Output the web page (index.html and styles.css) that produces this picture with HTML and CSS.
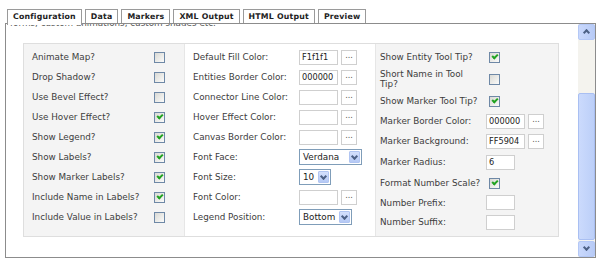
FILE: index.html
```html
<!DOCTYPE html>
<html lang="en">
  <head>
    <meta charset="UTF-8" />
    <title>Map Configuration</title>
    <link rel="stylesheet" href="styles.css">
  </head>
  <body>
    <div class="tabs">
      <div class="tab active">Configuration</div>
      <div class="tab">Data</div>
      <div class="tab">Markers</div>
      <div class="tab">XML Output</div>
      <div class="tab">HTML Output</div>
      <div class="tab">Preview</div>
    </div>
    <div class="box">
      <div class="scroll">
        <div class="intro"><span>forms, custom animations, custom shades etc.</span></div>
        <div class="panel">
          <div class="col col1">
            <div class="row"><span class="label">Animate Map?</span><span class="chk"></span></div>
            <div class="row"><span class="label">Drop Shadow?</span><span class="chk"></span></div>
            <div class="row"><span class="label">Use Bevel Effect?</span><span class="chk"></span></div>
            <div class="row"><span class="label">Use Hover Effect?</span><span class="chk on"></span></div>
            <div class="row"><span class="label">Show Legend?</span><span class="chk on"></span></div>
            <div class="row"><span class="label">Show Labels?</span><span class="chk on"></span></div>
            <div class="row"><span class="label">Show Marker Labels?</span><span class="chk on"></span></div>
            <div class="row"><span class="label">Include Name in Labels?</span><span class="chk on"></span></div>
            <div class="row"><span class="label">Include Value in Labels?</span><span class="chk"></span></div>
          </div>
          <div class="col col2">
            <div class="row"><span class="label">Default Fill Color:</span><span class="field">F1f1f1</span><span class="btn">...</span></div>
            <div class="row"><span class="label">Entities Border Color:</span><span class="field">000000</span><span class="btn">...</span></div>
            <div class="row"><span class="label">Connector Line Color:</span><span class="field"></span><span class="btn">...</span></div>
            <div class="row"><span class="label">Hover Effect Color:</span><span class="field"></span><span class="btn">...</span></div>
            <div class="row"><span class="label">Canvas Border Color:</span><span class="field"></span><span class="btn">...</span></div>
            <div class="row"><span class="label">Font Face:</span><span class="select w-face">Verdana<i class="drop"></i></span></div>
            <div class="row"><span class="label">Font Size:</span><span class="select w-size">10<i class="drop"></i></span></div>
            <div class="row"><span class="label">Font Color:</span><span class="field"></span><span class="btn">...</span></div>
            <div class="row"><span class="label">Legend Position:</span><span class="select w-pos">Bottom<i class="drop"></i></span></div>
          </div>
          <div class="col col3">
            <div class="row"><span class="label">Show Entity Tool Tip?</span><span class="chk on"></span></div>
            <div class="row tall"><span class="label">Short Name in Tool Tip?</span><span class="chk"></span></div>
            <div class="row"><span class="label">Show Marker Tool Tip?</span><span class="chk on"></span></div>
            <div class="row"><span class="label">Marker Border Color:</span><span class="field">000000</span><span class="btn">...</span></div>
            <div class="row"><span class="label">Marker Background:</span><span class="field">FF5904</span><span class="btn">...</span></div>
            <div class="row r22"><span class="label">Marker Radius:</span><span class="field small">6</span></div>
            <div class="row"><span class="label">Format Number Scale?</span><span class="chk on"></span></div>
            <div class="row r19"><span class="label">Number Prefix:</span><span class="field small"></span></div>
            <div class="row"><span class="label">Number Suffix:</span><span class="field small"></span></div>
          </div>
        </div>
      </div>
      <div class="scrollbar">
        <div class="arrow up"></div>
        <div class="track"><div class="thumb"></div></div>
        <div class="arrow down"></div>
      </div>
    </div>
  </body>
</html>
```

FILE: styles.css
```css
body {
  margin: 0;
  padding: 9px 4px 0 5px;
  background: #fff;
  font-family: "DejaVu Sans", Verdana, sans-serif;
  font-size: 8.8px;
  color: #3d3d3d;
}
.tabs {
  display: flex;
  height: 14px;
  padding-left: 2px;
}
.tab {
  border: 1px solid #9a9a9a;
  border-bottom: none;
  background: #fff;
  font-weight: bold;
  font-size: 7.8px;
  letter-spacing: 0.2px;
  color: #222;
  padding: 0 5px;
  margin-right: 3px;
  line-height: 14px;
}
.tab.active {
  height: 15px;
  position: relative;
  z-index: 1;
}
.box {
  border: 1px solid #8c8c8c;
  height: 233px;
  display: flex;
}
.scroll {
  flex: 1;
  overflow: hidden;
}
.intro {
  height: 6px;
  overflow: hidden;
  padding-left: 4px;
  color: #555;
}
.intro span {
  display: block;
  margin-top: -6px;
  line-height: 11px;
}
.panel {
  margin: 13px 0 0 17px;
  width: 534px;
  height: 192px;
  border: 1px solid #dedede;
  display: flex;
}
.col {
  padding-top: 3px;
}
.col1 {
  width: 160px;
  background: #f4f4f4;
}
.col2 {
  width: 190px;
  background: #fff;
  border-left: 1px solid #e6e6e6;
  border-right: 1px solid #e6e6e6;
}
.col3 {
  flex: 1;
  background: #f4f4f4;
}
.row {
  height: 20px;
  display: flex;
  align-items: center;
}
.row.tall {
  height: 24px;
}
.row.r22 {
  height: 22px;
}
.row.r19 {
  height: 19px;
}
.col1 .label {
  padding-left: 8px;
  width: 122px;
}
.col2 .label {
  padding-left: 8px;
  width: 106px;
}
.col3 .label {
  padding-left: 4px;
  width: 106px;
}
.tall .label {
  width: 96px;
  margin-right: 10px;
  line-height: 10px;
}
.chk {
  width: 9px;
  height: 9px;
  border: 1px solid #6e88a6;
  background: linear-gradient(135deg, #d9d9d4, #fbfbfa);
  position: relative;
}
.col3 .chk {
  margin-left: 3px;
}
.chk.on::after {
  content: "";
  position: absolute;
  left: 2px;
  top: 1px;
  width: 4px;
  height: 2px;
  border-left: 2px solid #22a322;
  border-bottom: 2px solid #22a322;
  transform: rotate(-45deg);
}
.field {
  box-sizing: border-box;
  width: 39px;
  height: 15px;
  border: 1px solid #cfcfcf;
  background: #fff;
  padding-left: 2px;
  font-size: 8.2px;
  line-height: 13px;
  color: #222;
}
.field.small {
  width: 29px;
}
.btn {
  box-sizing: border-box;
  width: 16px;
  height: 15px;
  margin-left: 3px;
  border: 1px solid #cfcfcf;
  background: #fff;
  text-align: center;
  line-height: 10px;
  color: #555;
  font-size: 8px;
}
.select {
  box-sizing: border-box;
  height: 16px;
  border: 1px solid #7f9db9;
  background: #fff;
  padding-left: 3px;
  line-height: 14px;
  position: relative;
  color: #222;
}
.w-face {
  width: 63px;
}
.w-size {
  width: 32px;
}
.w-pos {
  width: 53px;
}
.drop {
  position: absolute;
  right: 1px;
  top: 1px;
  width: 11px;
  height: 12px;
  background: linear-gradient(#d4e0fc, #b5c9f5);
  border: 1px solid #b1c5f2;
  box-sizing: border-box;
  border-radius: 1px;
}
.drop::after {
  content: "";
  position: absolute;
  left: 2px;
  top: 2px;
  width: 3px;
  height: 3px;
  border-right: 2px solid #4d6185;
  border-bottom: 2px solid #4d6185;
  transform: rotate(45deg);
}
.scrollbar {
  width: 17px;
  display: flex;
  flex-direction: column;
  background: #f4f3ee;
}
.arrow {
  height: 16px;
  box-sizing: border-box;
  border: 1px solid #b4c8f6;
  background: linear-gradient(90deg, #c9d8fc, #b8cbf6);
  border-radius: 2px;
  position: relative;
}
.arrow::after {
  content: "";
  position: absolute;
  left: 5px;
  width: 3px;
  height: 3px;
  border-left: 2px solid #4d6185;
  border-top: 2px solid #4d6185;
}
.arrow.up::after {
  top: 5px;
  transform: rotate(45deg);
}
.arrow.down::after {
  top: 3px;
  transform: rotate(-135deg);
}
.track {
  flex: 1;
  padding-top: 53px;
}
.thumb {
  height: 147px;
  box-sizing: border-box;
  border: 1px solid #a9bff2;
  background: linear-gradient(90deg, #cbdafc, #bccff8);
  border-radius: 2px;
}
```
